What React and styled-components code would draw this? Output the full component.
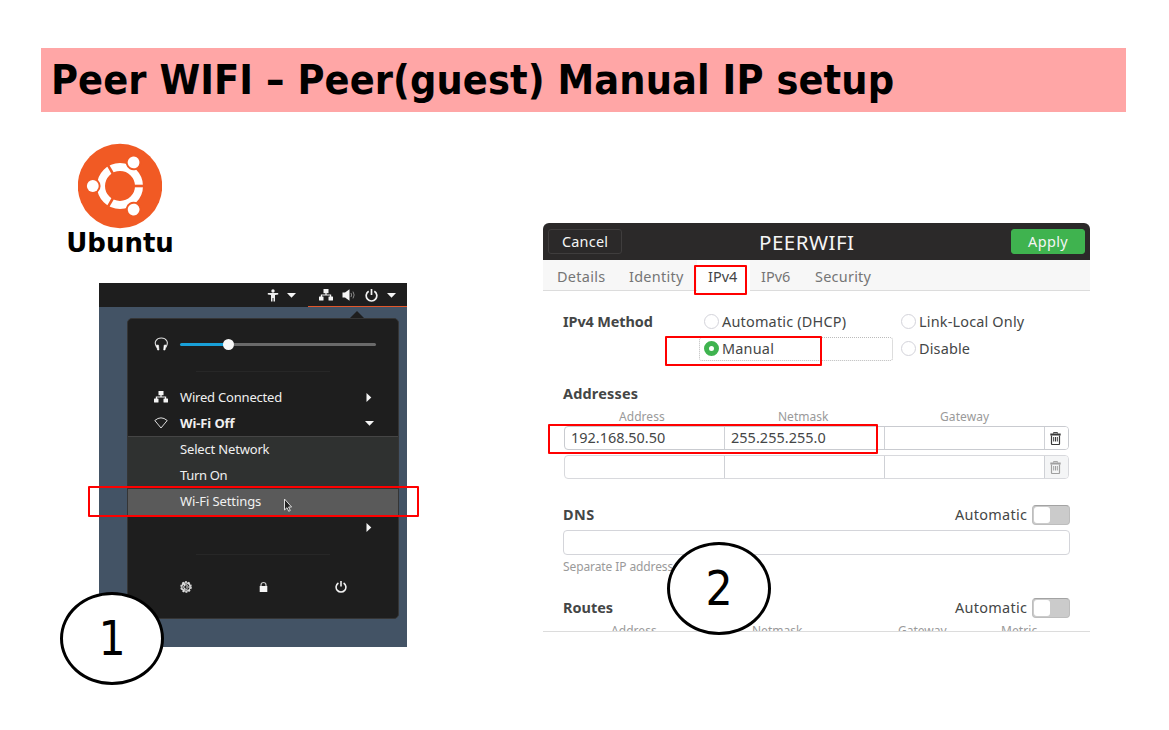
import React from "react";
import styled, { createGlobalStyle } from "styled-components";

const Global = createGlobalStyle`
  * { box-sizing: border-box; }
  body { margin: 0; background: #fff; }
`;

const Slide = styled.main`
  position: relative;
  width: 1169px;
  height: 730px;
  overflow: hidden;
  background: #fff;
  padding: 48px 43px 0 41px;
  font-family: "Noto Sans", "Open Sans", sans-serif;
`;

const Title = styled.h1`
  margin: 0;
  height: 64px;
  padding-left: 10px;
  background: #ffa6a6;
  color: #000;
  font: bold 41px/64px "DejaVu Sans Condensed", "DejaVu Sans", sans-serif;
  font-stretch: condensed;
  letter-spacing: 0.08px;
  white-space: nowrap;
`;

const Columns = styled.div`
  display: flex;
  align-items: flex-start;
`;

const LeftColumn = styled.section`
  width: 502px;
  padding-top: 31px;
`;

const RightColumn = styled.section`
  width: 547px;
  padding-top: 111px;
`;

const Brand = styled.div`
  width: 158px;
  display: flex;
  flex-direction: column;
  align-items: center;
  svg { display: block; }
`;

const BrandName = styled.div`
  font: bold 26px/29px "DejaVu Sans", sans-serif;
  color: #000;
`;

const Label = styled.span`
  display: inline-block;
  flex: none;
  width: ${(p) => p.$w}px;
  font-size: ${(p) => p.$size || 14.45}px;
  font-weight: ${(p) => (p.$bold ? 700 : 400)};
  letter-spacing: ${(p) => p.$ls || 0}px;
  line-height: 20px;
  white-space: nowrap;
`;

const Desktop = styled.div`
  width: 308px;
  height: 364px;
  margin: 25px 0 0 58px;
  background: #435365;
  color: #f0f0f0;
`;

const TopBar = styled.div`
  height: 24px;
  background: #1e1e1e;
  display: flex;
  justify-content: flex-end;
`;

const Tray = styled.div`
  display: flex;
  align-items: center;
  gap: ${(p) => p.$gap}px;
  width: ${(p) => p.$w}px;
  padding-top: 1px;
  padding-left: ${(p) => p.$pl || 0}px;
  border-bottom: 1.5px solid ${(p) => (p.$active ? "#e2572b" : "transparent")};
  svg { display: block; }
`;

const MenuWrap = styled.div`
  padding: 4px 8px 0 28px;
`;

const MenuTip = styled.div`
  width: 0;
  height: 0;
  margin-left: 222px;
  border: 8px solid transparent;
  border-top: 0;
  border-bottom: 8px solid #1e1e1e;
`;

const Menu = styled.div`
  width: 272px;
  height: 301px;
  margin-top: -1px;
  background: #1e1e1e;
  border: 1px solid #353535;
  border-radius: 5px;
`;

const SliderRow = styled.div`
  display: flex;
  align-items: center;
  height: 52px;
  padding: 0 0 2px 26px;
  svg { margin-right: 11px; }
`;

const Track = styled.div`
  display: flex;
  align-items: center;
  width: 196px;
  height: 3px;
  border-radius: 2px;
  background: linear-gradient(to right, #19a0d8 48px, #6a6a6a 48px);
`;

const Knob = styled.div`
  width: 11px;
  height: 11px;
  margin-left: 43px;
  border-radius: 50%;
  background: #f7f7f7;
`;

const Separator = styled.div`
  width: 134px;
  height: 1px;
  margin: 0 auto;
  background: #272727;
`;

const MenuRow = styled.div`
  display: flex;
  align-items: center;
  height: 26px;
  padding: 0 24px 0 26px;
  svg { flex: none; }
  ${Label} { margin-left: 12px; }
  > :last-child { margin-left: auto; }
`;

const Devices = styled.div`
  padding-top: 12px;
`;

const CollapsedRow = styled.div`
  height: 38px;
  padding: 7px 24px 0 0;
  display: flex;
  justify-content: flex-end;
`;

const SubMenu = styled.div`
  background: #2f3130;
  border-top: 1px solid #454545;
  border-bottom: 1px solid #4a4a4a;
`;

const SubItem = styled.div`
  height: 26px;
  padding: 2px 0 0 52px;
  background: ${(p) => (p.$active ? "#5a5a5a" : "transparent")};
  line-height: 0;
`;

const Actions = styled.div`
  display: flex;
  justify-content: space-between;
  padding: 0 51px 0 52px;
  margin-top: 26px;
`;

const Dialog = styled.div`
  height: 409px;
  overflow: hidden;
  border-radius: 6px 6px 0 0;
  border-bottom: 1px solid #dcdcdc;
  background: #fff;
  color: #444646;
`;

const Header = styled.div`
  display: flex;
  align-items: center;
  justify-content: space-between;
  height: 37px;
  padding: 0 5px;
  background: #2b2929;
  color: #f5f5f5;
`;

const DialogTitle = styled.div`
  margin-right: 20px;
  line-height: 0;
`;

const Button = styled.div`
  display: flex;
  align-items: center;
  justify-content: center;
  width: 74px;
  height: 25px;
  border-radius: 3px;
  border: 1px solid ${(p) => (p.$primary ? "#3fb34f" : "#3f3d3d")};
  background: ${(p) => (p.$primary ? "#3fb34f" : "transparent")};
`;

const Tabs = styled.div`
  display: flex;
  align-items: flex-start;
  height: 31px;
  padding-left: 3px;
  background: #f7f7f7;
  border-bottom: 1px solid #dcdcdc;
  color: #757575;
`;

const Tab = styled.div`
  height: 31px;
  padding: 7px 0 0 11px;
  width: ${(p) => p.$w}px;
  background: ${(p) => (p.$active ? "#fff" : "transparent")};
  color: ${(p) => (p.$active ? "#444646" : "inherit")};
  line-height: 0;
`;

const Body = styled.div`
  padding: 17px 20px 0;
`;

const Method = styled.div`
  display: grid;
  grid-template-columns: 136px 197px 170px;
  grid-auto-rows: 27px;
  align-items: center;
`;

const Option = styled.div`
  display: flex;
  align-items: center;
  width: ${(p) => (p.$focus ? 194 : 160)}px;
  height: 24px;
  padding-left: 4px;
  border: 1px ${(p) => (p.$focus ? "dotted #bbb" : "solid transparent")};
  border-radius: 3px;
`;

const Radio = styled.span`
  width: 15px;
  height: 15px;
  margin-right: 3px;
  border-radius: 50%;
  background: #fff;
  border: ${(p) => (p.$on ? "5px solid #3fb34f" : "1px solid #d3d3da")};
`;

const Section = styled.div`
  display: flex;
  align-items: center;
  justify-content: space-between;
  height: 20px;
  margin-top: ${(p) => p.$mt}px;
`;

const SwitchGroup = styled.div`
  display: flex;
  align-items: center;
  gap: 5px;
`;

const Switch = styled.span`
  width: 38px;
  height: 20px;
  padding: 1px;
  border: 1px solid #bdbdbd;
  border-top-color: #a3a3a3;
  border-radius: 4px;
  background: #cbcbcb;
  &::before {
    content: "";
    display: block;
    width: 16px;
    height: 16px;
    border-radius: 3px;
    background: #fff;
  }
`;

const ColumnHeads = styled.div`
  display: grid;
  grid-template-columns: ${(p) => p.$cols};
  height: ${(p) => p.$h}px;
  padding: ${(p) => p.$pt}px 0 0 ${(p) => p.$pl}px;
  color: #9a9a9a;
`;

const AddressRow = styled.div`
  display: grid;
  grid-template-columns: 160px 160px 160px 1fr;
  width: 505px;
  height: 24px;
  margin: 0 0 5px 1px;
  border: 1px solid ${(p) => (p.$dim ? "#d8d9dd" : "#c9cbd0")};
  border-radius: 4px;
  overflow: hidden;
`;

const Cell = styled.div`
  padding: 1px 0 0 6px;
  border-right: 1px solid #cfd1d6;
  line-height: 0;
`;

const TrashCell = styled.div`
  display: flex;
  align-items: center;
  justify-content: center;
  padding-right: 2px;
  background: ${(p) => (p.$dim ? "#f4f5f6" : "#fff")};
  color: ${(p) => (p.$dim ? "#a0a0a0" : "#3a3a3a")};
`;

const TextField = styled.div`
  height: 25px;
  margin-top: 5px;
  border: 1px solid #d4d5da;
  border-radius: 4px;
`;

const Hint = styled.div`
  display: flex;
  align-items: flex-start;
  height: 23px;
  padding-top: 2px;
  color: #9a9a9a;
`;

const Highlight = styled.div`
  position: absolute;
  left: ${(p) => p.$x}px;
  top: ${(p) => p.$y}px;
  width: ${(p) => p.$w}px;
  height: ${(p) => p.$h}px;
  border: 2px solid #f00;
  border-radius: 1px;
`;

const Step = styled.div`
  position: absolute;
  left: ${(p) => p.$x}px;
  top: ${(p) => p.$y}px;
  width: 104px;
  height: 93px;
  border: 3px solid #000;
  border-radius: 50%;
  background: #fff;
  text-align: center;
  font: 47.5px/88px "DejaVu Sans Condensed", "DejaVu Sans", sans-serif;
  font-stretch: condensed;
  color: #000;
`;

const Pointer = styled.svg`
  position: absolute;
  left: 283px;
  top: 498px;
`;

const UbuntuLogo = () => (
  <svg width="84" height="86" viewBox="-42 -43 84 86">
    <circle r="42.2" fill="#f15a24" />
    <circle r="19" fill="none" stroke="#fff" strokeWidth="8" />
    {[0, 120, 240].map((a) => (
      <g key={a} transform={`rotate(${a})`}>
        <circle cx="-27.2" r="7.8" fill="#f15a24" />
        <circle cx="-27.2" r="5.9" fill="#fff" />
        <rect x="13" y="-1.3" width="12" height="2.6" fill="#f15a24" />
      </g>
    ))}
  </svg>
);

const Person = () => (
  <svg width="12" height="13" viewBox="0 0 12 13" fill="#eee">
    <circle cx="6" cy="2" r="1.7" />
    <path d="M.8 4h10.4v1.4L8 6v6.5H6.5V9h-1v3.500H4V6L.8 5.400z" />
  </svg>
);

const Down = () => (
  <svg width="9" height="5" viewBox="0 0 9 5" fill="#f5f5f5"><path d="M0 0h9L4.500 4.800z" /></svg>
);

const Right = () => (
  <svg width="9" height="9" viewBox="0 0 9 9" fill="#f5f5f5"><path d="M1.500 0l4.800 4.500L1.500 9z" /></svg>
);

const Wired = () => (
  <svg width="14" height="12" viewBox="0 0 14 12" fill="#f5f5f5">
    <rect x="4.500" width="5" height="4.200" />
    <path d="M6.400 4h1.200v1.500h4.600v2.500h-1.200V6.600H3V8H1.800V5.500h4.600z" />
    <rect y="7.500" width="4.500" height="4" rx=".5" />
    <rect x="9.500" y="7.500" width="4.500" height="4" rx=".5" />
  </svg>
);

const Volume = () => (
  <svg width="14" height="12" viewBox="0 0 14 12" fill="none">
    <path d="M.5 3.500H3L7.500.3v11.400L3 8.500H.5z" fill="#f5f5f5" />
    <path d="M9 4q1.200 2 0 4M11 2.600q2.300 3.400 0 6.800" stroke="#888" />
  </svg>
);

const Power = ({ size = 13 }) => (
  <svg width={size} height={size} viewBox="0 0 13 13" fill="none" stroke="#f2f2f2" strokeWidth="1.700">
    <path d="M3.700 2.200a5.300 5.300 0 1 0 5.600 0M6.500 0v6" />
  </svg>
);

const Headphones = () => (
  <svg width="15" height="14" viewBox="0 0 15 14" fill="none">
    <path d="M2.800 10.500C-.8 5 2.500 1 7.300 1s8.100 4 4.500 9.500" stroke="#ddd" strokeWidth="1.100" />
    <path d="M2.500 8l2 .2.400 4.800H3.600zM12.100 8l-2 .2-.4 4.800H11z" fill="#fff" stroke="#fff" strokeWidth=".6" />
  </svg>
);

const Wifi = () => (
  <svg width="14" height="12" viewBox="0 0 14 12" fill="none" stroke="#ddd" strokeWidth="1">
    <path d="M.8 3.500Q7-1.800 13.200 3.500L7 11z" />
  </svg>
);

const Gear = () => (
  <svg width="12" height="12" viewBox="-6 -6 12 12" fill="none" stroke="#e4e4e4">
    <circle r="5.100" strokeWidth="1.300" strokeDasharray="2 1.200" />
    <circle r="4.200" strokeWidth="1.200" />
    <path d="M1.600 -1.500A2.200 2.200 0 1 0 1.600 1.500M0 0h4M-1 -1.500L-2.500-3M-1 1.500L-2.500 3" strokeWidth="1.100" />
  </svg>
);

const Lock = () => (
  <svg width="9" height="12" viewBox="0 0 9 12">
    <path d="M2 5.500V4a2.500 2.500 0 0 1 5 0v1.500" fill="none" stroke="#ccc" strokeWidth="1.200" />
    <rect x=".7" y="5" width="7.600" height="6" fill="#f5f5f5" />
  </svg>
);

const Trash = () => (
  <svg width="11" height="13" viewBox="0 0 11 13" fill="none" stroke="currentColor">
    <path d="M3.500 1.500V.6h4v.9" />
    <path d="M.3 2.500h10.400" strokeWidth="2" />
    <path d="M1.500 3.500v8.200q0 .8.800.8h6.400q.8 0 .8-.8V3.500" strokeWidth="1.200" />
    <path d="M3.700 5v4.500M5.500 5v4.500M7.300 5v4.500" />
  </svg>
);

const MethodOption = ({ text, w, ls, on }) => (
  <Option $focus={on}>
    <Radio $on={on} />
    <Label $w={w} $ls={ls}>{text}</Label>
  </Option>
);

const AutomaticSwitch = () => (
  <SwitchGroup>
    <Label $w={72} $ls={0.3}>Automatic</Label>
    <Switch />
  </SwitchGroup>
);

export default function App() {
  return (
    <>
      <Global />
      <Slide>
        <Title>Peer WIFI – Peer(guest) Manual IP setup</Title>
        <Columns>
          <LeftColumn>
            <Brand>
              <UbuntuLogo />
              <BrandName>Ubuntu</BrandName>
            </Brand>
            <Desktop>
              <TopBar>
                <Tray $w={41} $gap={8}><Person /><Down /></Tray>
                <Tray $w={99} $pl={11} $gap={9} $active><Wired /><Volume /><Power /><Down /></Tray>
              </TopBar>
              <MenuWrap>
                <MenuTip />
                <Menu>
                  <SliderRow><Headphones /><Track><Knob /></Track></SliderRow>
                  <Separator />
                  <Devices>
                    <MenuRow><Wired /><Label $w={102} $size={13} $ls={-0.2}>Wired Connected</Label><Right /></MenuRow>
                    <MenuRow><Wifi /><Label $w={55} $size={13} $ls={-0.1} $bold>Wi-Fi Off</Label><Down /></MenuRow>
                  </Devices>
                  <SubMenu>
                    <SubItem><Label $w={89} $size={13} $ls={-0.17}>Select Network</Label></SubItem>
                    <SubItem><Label $w={47} $size={13} $ls={-0.35}>Turn On</Label></SubItem>
                    <SubItem $active><Label $w={81} $size={13} $ls={-0.1}>Wi-Fi Settings</Label></SubItem>
                  </SubMenu>
                  <CollapsedRow><Right /></CollapsedRow>
                  <Separator />
                  <Actions><Gear /><Lock /><Power size={12} /></Actions>
                </Menu>
              </MenuWrap>
            </Desktop>
          </LeftColumn>
          <RightColumn>
            <Dialog>
              <Header>
                <Button><Label $w={46} $ls={0.2}>Cancel</Label></Button>
                <DialogTitle><Label $w={95} $size={20.5} $ls={0.5}>PEERWIFI</Label></DialogTitle>
                <Button $primary><Label $w={40} $ls={0.4}>Apply</Label></Button>
              </Header>
              <Tabs>
                <Tab $w={72}><Label $w={48} $ls={0.3}>Details</Label></Tab>
                <Tab $w={79}><Label $w={54} $ls={0.28}>Identity</Label></Tab>
                <Tab $w={53} $active><Label $w={29}>IPv4</Label></Tab>
                <Tab $w={54}><Label $w={29}>IPv6</Label></Tab>
                <Tab $w={80}><Label $w={56} $ls={0.25}>Security</Label></Tab>
              </Tabs>
              <Body>
                <Method>
                  <Label $w={90} $ls={-0.1} $bold>IPv4 Method</Label>
                  <MethodOption text="Automatic (DHCP)" w={125} ls={0.2} />
                  <MethodOption text="Link-Local Only" w={106} ls={0.18} />
                  <span />
                  <MethodOption text="Manual" w={52} ls={0.2} on />
                  <MethodOption text="Disable" w={51} ls={0.15} />
                </Method>
                <Section $mt={22}><Label $w={75} $ls={0.2} $bold>Addresses</Label></Section>
                <ColumnHeads $h={22} $pt={3} $pl={56} $cols="159px 162px 49px">
                  <Label $w={45} $size={12} $ls={0.05}>Address</Label>
                  <Label $w={50} $size={12}>Netmask</Label>
                  <Label $w={49} $size={12} $ls={0.1}>Gateway</Label>
                </ColumnHeads>
                <AddressRow>
                  <Cell><Label $w={94}>192.168.50.50</Label></Cell>
                  <Cell><Label $w={95} $ls={0.05}>255.255.255.0</Label></Cell>
                  <Cell />
                  <TrashCell><Trash /></TrashCell>
                </AddressRow>
                <AddressRow $dim><Cell /><Cell /><Cell /><TrashCell $dim><Trash /></TrashCell></AddressRow>
                <Section $mt={26}>
                  <Label $w={32} $ls={0.5} $bold>DNS</Label>
                  <AutomaticSwitch />
                </Section>
                <TextField />
                <Hint><Label $w={109} $size={12} $ls={-0.1}>Separate IP address</Label></Hint>
                <Section $mt={20}>
                  <Label $w={50} $bold>Routes</Label>
                  <AutomaticSwitch />
                </Section>
                <ColumnHeads $h={23} $pt={3} $pl={48} $cols="141px 146px 103px 36px">
                  <Label $w={45} $size={12} $ls={0.05}>Address</Label>
                  <Label $w={50} $size={12}>Netmask</Label>
                  <Label $w={48} $size={12}>Gateway</Label>
                  <Label $w={36} $size={12} $ls={0.1}>Metric</Label>
                </ColumnHeads>
              </Body>
            </Dialog>
          </RightColumn>
        </Columns>
        <Pointer width="10" height="15" viewBox="0 0 10 15">
          <path d="M1.500 1v11l2.500-2.300 1.700 3.600 1.600-.8-1.700-3.500h3z" fill="#222" stroke="#ddd" />
        </Pointer>
        <Highlight $x={88} $y={486} $w={331} $h={31} />
        <Highlight $x={694} $y={265} $w={53} $h={30} />
        <Highlight $x={665} $y={336} $w={157} $h={30} />
        <Highlight $x={548} $y={424} $w={330} $h={30} />
        <Step $x={60} $y={592}>1</Step>
        <Step $x={667} $y={542}>2</Step>
      </Slide>
    </>
  );
}
